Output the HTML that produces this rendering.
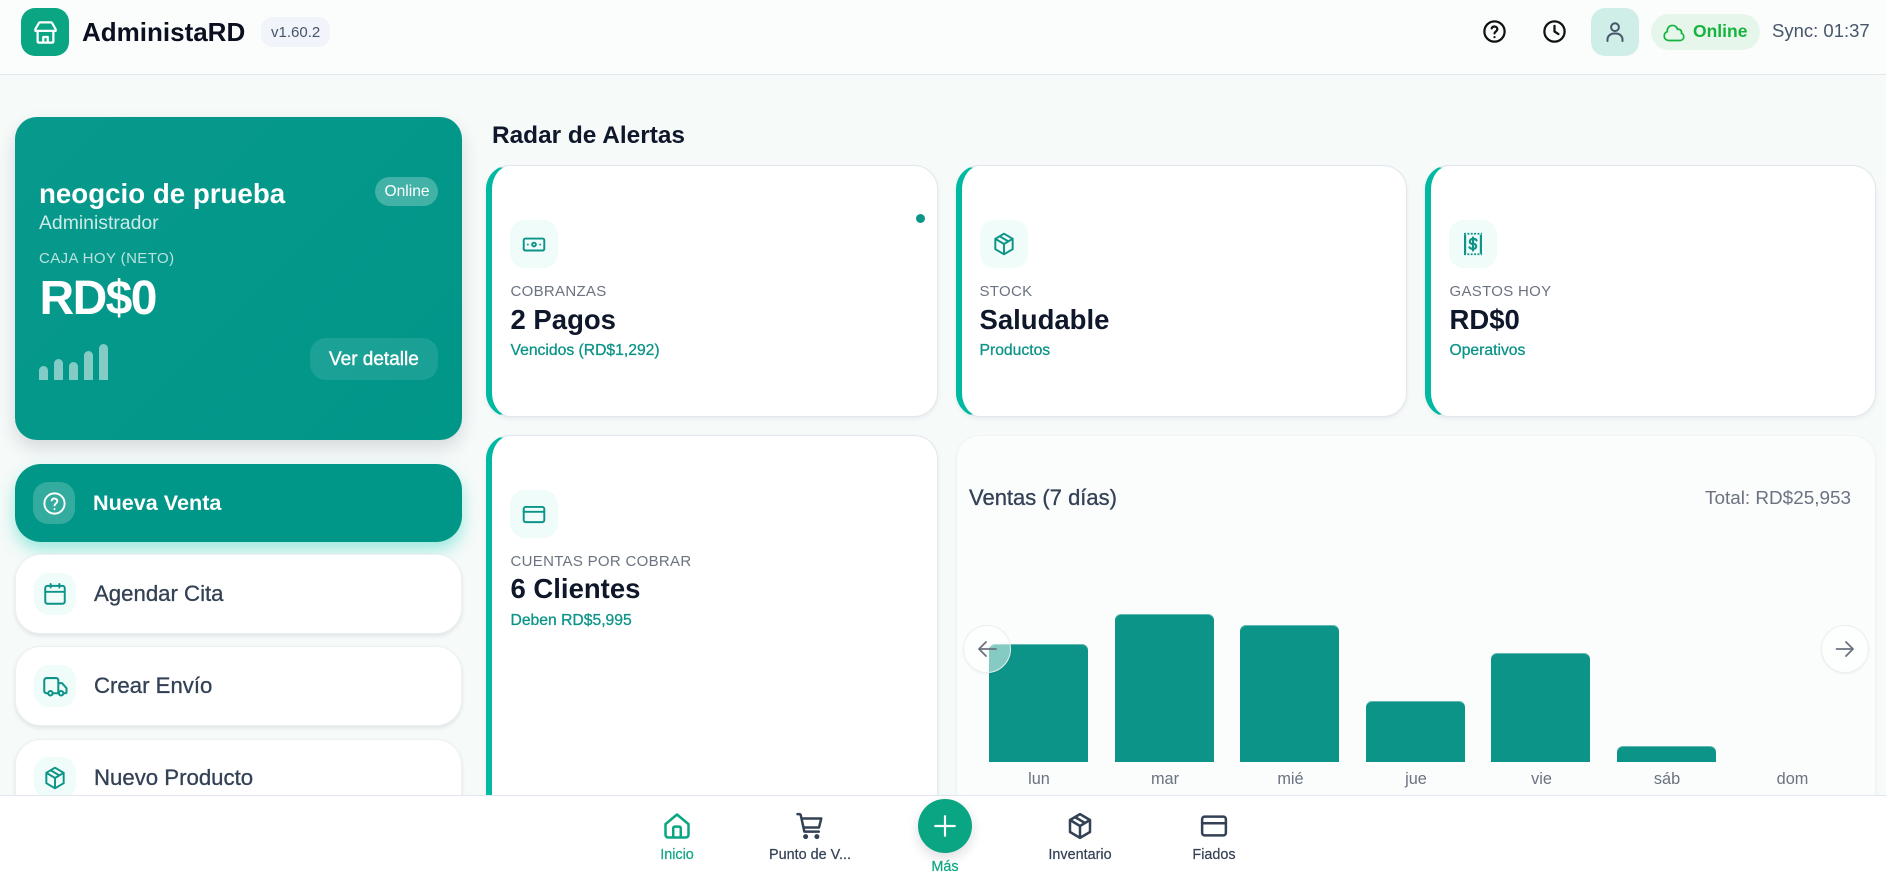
<!DOCTYPE html>
<html lang="es"><head><meta charset="utf-8"><title>AdministaRD</title>
<style>
*{box-sizing:border-box;margin:0;padding:0}
html,body{width:1886px;height:878px;overflow:hidden}
body{position:relative;background:#f6faf9;font-family:"Liberation Sans",sans-serif;color:#0f172a}
.a,.t{position:absolute}
.t{white-space:nowrap;line-height:1}
.m{-webkit-text-stroke:.3px currentColor}
svg{display:block;fill:none;stroke:currentColor;stroke-linecap:round;stroke-linejoin:round}
.tile{position:absolute;display:flex;align-items:center;justify-content:center;background:#effcfa;color:#0d9488;border-radius:15px}
.card{position:absolute;background:#fff;border:1px solid #e2e6ee;border-left:6px solid #00b9a2;border-radius:24px;box-shadow:0 2px 5px rgba(15,23,42,.06)}
.act{position:absolute;left:15px;width:447px;background:#fff;border:1px solid #eef1f4;border-radius:26px;box-shadow:0 2px 4px rgba(15,23,42,.1)}
.lab{font-size:15px;letter-spacing:.3px;color:#6b7280}
.val{font-size:27.5px;font-weight:700;color:#0f172a}
.sub{font-size:15.7px;color:#0d9488}
.act-t{font-size:22.2px;color:#334155}
.bar{position:absolute;width:99px;background:#0d9488;border-radius:6px 6px 0 0;bottom:116px;box-shadow:inset 0 1px 0 rgba(255,255,255,.35)}
.day{font-size:16.3px;color:#6b7280;transform:translateX(-50%)}
.hb{position:absolute;width:9px;bottom:498px;background:rgba(255,255,255,.5);border-radius:5px 5px 0 0}
.nl{font-size:14.4px;color:#334155;transform:translateX(-50%);-webkit-text-stroke:.2px currentColor}
.arr{position:absolute;top:625px;width:48px;height:48px;border-radius:50%;background:rgba(255,255,255,.5);border:1px solid #ebeef1;display:flex;align-items:center;justify-content:center;color:#6b7280;box-shadow:0 1px 2px rgba(0,0,0,.05)}
</style></head><body>

<!-- Header -->
<div class="a" style="left:0;top:0;width:1886px;height:75px;background:#fbfdfc;border-bottom:1px solid #e2e6ee"></div>
<div class="a" style="left:21px;top:8px;width:48px;height:48px;border-radius:14px;background:#0aa582;display:flex;align-items:center;justify-content:center;color:#fff">
<svg width="27" height="27" viewBox="0 0 24 24" stroke-width="2"><path d="M7 3h10a1 1 0 0 1 .9.6L21 9v1.500H3V9l3.100-5.400A1 1 0 0 1 7 3zM5 10.500V20a1 1 0 0 0 1 1h12a1 1 0 0 0 1-1v-9.500M10 21v-5h4v5"/></svg></div>
<div class="t" style="left:82px;top:19px;font-size:26px;font-weight:700;color:#0b1020">AdministaRD</div>
<div class="a" style="left:261px;top:17px;width:69px;height:30px;background:#f1f4fa;border-radius:12px"></div>
<div class="t" style="left:271px;top:24.500px;font-size:15px;color:#475569">v1.60.2</div>

<svg class="a" style="left:1481px;top:18px;color:#111" width="27" height="27" viewBox="0 0 24 24" stroke-width="2"><path d="M9.500 9.200a2.600 2.600 0 0 1 5 .800c0 1.700-2.500 2.200-2.500 3.700M21 12a9 9 0 1 1-18 0 9 9 0 0 1 18 0zm-9 5h.01"/></svg>
<svg class="a" style="left:1541px;top:18px;color:#111" width="27" height="27" viewBox="0 0 24 24" stroke-width="2"><path d="M12 7v5l3.500 2.300M21 12a9 9 0 1 1-18 0 9 9 0 0 1 18 0z"/></svg>
<div class="a" style="left:1591px;top:8px;width:48px;height:48px;border-radius:14px;background:#d0eee8;display:flex;align-items:center;justify-content:center;color:#475569">
<svg width="24" height="24" viewBox="0 0 24 24" stroke-width="2"><circle cx="12" cy="7.200" r="3.900"/><path d="M4.500 21v-1.500a6.500 6 0 0 1 6.500-6h2a6.500 6 0 0 1 6.500 6V21"/></svg></div>
<div class="a" style="left:1651px;top:14px;width:109px;height:36px;border-radius:18px;background:#e6f6ea"></div>
<svg class="a" style="left:1662px;top:21px;color:#16b33f" width="24" height="24" viewBox="0 0 24 24" stroke-width="1.700"><path d="M2.250 15a4.500 4.500 0 0 0 4.500 4.500H18a3.750 3.750 0 0 0 1.332-7.257 3 3 0 0 0-3.758-3.848 5.250 5.250 0 0 0-10.233 2.330A4.502 4.502 0 0 0 2.250 15z"/></svg>
<div class="t" style="left:1693px;top:23.200px;font-size:17.500px;font-weight:700;color:#16b33f">Online</div>
<div class="t" style="left:1772px;top:22.300px;font-size:18.500px;color:#475569">Sync: 01:37</div>

<!-- Hero -->
<div class="a" style="left:15px;top:117px;width:447px;height:323px;border-radius:22px;background:linear-gradient(135deg,#07998c,#009688);box-shadow:0 8px 18px rgba(15,23,42,.14)"></div>
<div class="t" style="left:39px;top:179.600px;font-size:27.700px;font-weight:700;color:#fff">neogcio de prueba</div>
<div class="a" style="left:375px;top:177px;width:63px;height:29px;border-radius:15px;background:rgba(255,255,255,.25)"></div>
<div class="t" style="left:384.500px;top:183.500px;font-size:15.600px;color:#fff">Online</div>
<div class="t" style="left:39px;top:213.600px;font-size:19.400px;color:rgba(255,255,255,.8)">Administrador</div>
<div class="t" style="left:39px;top:250.600px;font-size:15px;letter-spacing:.4px;color:rgba(255,255,255,.72)">CAJA HOY (NETO)</div>
<div class="t" style="left:39.500px;top:275.400px;font-size:48px;letter-spacing:-1.600px;font-weight:700;color:#fff">RD$0</div>
<div class="hb" style="left:39px;height:14px"></div>
<div class="hb" style="left:54px;height:21px"></div>
<div class="hb" style="left:69px;height:18px"></div>
<div class="hb" style="left:84px;height:29px"></div>
<div class="hb" style="left:99px;height:36px"></div>
<div class="a" style="left:310px;top:338px;width:128px;height:42px;border-radius:16px;background:rgba(255,255,255,.1)"></div>
<div class="t m" style="left:329px;top:349.600px;font-size:19px;color:#fff;-webkit-text-stroke:.4px #fff">Ver detalle</div>

<!-- Actions -->
<div class="a" style="left:15px;top:464px;width:447px;height:78px;border-radius:26px;background:#009688;box-shadow:0 8px 16px rgba(45,212,191,.45)"></div>
<div class="a" style="left:33px;top:482px;width:42px;height:42px;border-radius:15px;background:rgba(255,255,255,.2);display:flex;align-items:center;justify-content:center;color:#fff">
<svg width="27" height="27" viewBox="0 0 24 24" stroke-width="1.700"><path d="M9.500 9.200a2.600 2.600 0 0 1 5 .800c0 1.700-2.500 2.200-2.500 3.700M21 12a9 9 0 1 1-18 0 9 9 0 0 1 18 0zm-9 5h.01"/></svg></div>
<div class="t" style="left:93px;top:491.700px;font-size:21.600px;font-weight:700;color:#fff">Nueva Venta</div>

<div class="act" style="top:554px;height:80px"></div>
<div class="tile" style="left:34px;top:573px;width:42px;height:42px"><svg width="26" height="26" viewBox="0 0 24 24" stroke-width="1.800"><rect x="3" y="4.500" width="18" height="16.500" rx="2"/><path d="M3 10h18M8 2.700v3.300M16 2.700v3.300"/></svg></div>
<div class="t act-t m" style="left:94px;top:583px">Agendar Cita</div>

<div class="act" style="top:646px;height:80px"></div>
<div class="tile" style="left:34px;top:665px;width:42px;height:42px"><svg width="27" height="27" viewBox="0 0 24 24" stroke-width="1.800"><path d="M5.500 18H4a2 2 0 0 1-2-2V6.500a2 2 0 0 1 2-2h8.500a2 2 0 0 1 2 2V18M9.500 18h5M14.500 9h3.300l4 4.500V17a1 1 0 0 1-1 1h-1.300"/><circle cx="7.500" cy="18" r="2"/><circle cx="17" cy="18" r="2"/></svg></div>
<div class="t act-t m" style="left:94px;top:675px">Crear Envío</div>

<div class="act" style="top:739px;height:90px"></div>
<div class="tile" style="left:34px;top:757px;width:42px;height:42px"><svg width="26" height="26" viewBox="0 0 24 24" stroke-width="1.800"><path d="M12 2.500l8 4.700v9.600l-8 4.700-8-4.700V7.200zM4 7.200 12 12l8-4.800M12 12v9.500M8 4.900l8 4.700"/></svg></div>
<div class="t act-t m" style="left:94px;top:767.400px">Nuevo Producto</div>

<!-- Radar -->
<div class="t" style="left:492px;top:123.700px;font-size:24.400px;font-weight:700;color:#0f172a">Radar de Alertas</div>

<div class="card" style="left:486px;top:165px;width:452px;height:252px"></div>
<div class="a" style="left:915.500px;top:213.500px;width:9px;height:9px;border-radius:50%;background:#0d9488"></div>
<div class="tile" style="left:510px;top:220px;width:48px;height:48px"><svg width="26" height="26" viewBox="0 0 24 24" stroke-width="1.800"><rect x="2.500" y="7" width="19" height="11" rx="1.500"/><circle cx="12" cy="12.500" r="1.700"/><path d="M6.300 12.500h.01M17.700 12.500h.01"/></svg></div>
<div class="t lab" style="left:510.500px;top:284.300px">COBRANZAS</div>
<div class="t val" style="left:510.500px;top:306.100px">2 Pagos</div>
<div class="t sub m" style="left:510.500px;top:342.800px">Vencidos (RD$1,292)</div>

<div class="card" style="left:956px;top:165px;width:451px;height:252px"></div>
<div class="tile" style="left:980px;top:220px;width:48px;height:48px"><svg width="26" height="26" viewBox="0 0 24 24" stroke-width="1.800"><path d="M12 2.500l8 4.700v9.600l-8 4.700-8-4.700V7.200zM4 7.200 12 12l8-4.800M12 12v9.500M8 4.900l8 4.700"/></svg></div>
<div class="t lab" style="left:979.500px;top:284.300px">STOCK</div>
<div class="t val" style="left:979.500px;top:306.100px">Saludable</div>
<div class="t sub m" style="left:979.500px;top:342.800px">Productos</div>

<div class="card" style="left:1425px;top:165px;width:451px;height:252px"></div>
<div class="tile" style="left:1449px;top:220px;width:48px;height:48px"><svg width="26" height="26" viewBox="0 0 24 24" stroke-width="2"><path d="M4.700 3.500v17.500M19.300 3.500v17.500" stroke-linecap="butt"/><path d="M3.700 2.500h16.600M3.700 21.500h16.600" stroke-dasharray="1.800 1.300" stroke-linecap="butt" stroke-width="1.600"/><path d="M12 6v12M15.300 8.700a2.700 2 0 0 0-2.700-1.300h-1.200a2.300 2.200 0 0 0 0 4.500h1.200a2.300 2.200 0 0 1 0 4.500h-1.200a2.700 2 0 0 1-2.700-1.400"/></svg></div>
<div class="t lab" style="left:1449.500px;top:284.300px">GASTOS HOY</div>
<div class="t val" style="left:1449.500px;top:306.100px">RD$0</div>
<div class="t sub m" style="left:1449.500px;top:342.800px">Operativos</div>

<div class="card" style="left:486px;top:435px;width:452px;height:400px"></div>
<div class="tile" style="left:510px;top:490px;width:48px;height:48px"><svg width="26" height="26" viewBox="0 0 24 24" stroke-width="1.800"><rect x="2.500" y="5.500" width="19" height="14" rx="1.800"/><path d="M2.500 10h19"/></svg></div>
<div class="t lab" style="left:510.500px;top:554.300px">CUENTAS POR COBRAR</div>
<div class="t val" style="left:510.500px;top:574.700px">6 Clientes</div>
<div class="t sub m" style="left:510.500px;top:612.800px">Deben RD$5,995</div>

<!-- Chart -->
<div class="a" style="left:956px;top:435px;width:920px;height:400px;background:#fbfdfd;border:1px solid #f1f4f5;border-radius:24px;box-shadow:0 1px 3px rgba(15,23,42,.04)"></div>
<div class="t m" style="left:969px;top:487.400px;font-size:22px;color:#334155">Ventas (7 días)</div>
<div class="t" style="left:1705px;top:490px;font-size:18.900px;color:#6b7280">Total: RD$25,953</div>
<div class="bar" style="left:989px;top:644px"></div>
<div class="bar" style="left:1115px;top:614px"></div>
<div class="bar" style="left:1240px;top:625px"></div>
<div class="bar" style="left:1365.500px;top:701px"></div>
<div class="bar" style="left:1491px;top:653px"></div>
<div class="bar" style="left:1617px;top:746px"></div>
<div class="t day" style="left:1039px;top:770.500px">lun</div>
<div class="t day" style="left:1165px;top:770.500px">mar</div>
<div class="t day" style="left:1290.500px;top:770.500px">mié</div>
<div class="t day" style="left:1416px;top:770.500px">jue</div>
<div class="t day" style="left:1541.500px;top:770.500px">vie</div>
<div class="t day" style="left:1667px;top:770.500px">sáb</div>
<div class="t day" style="left:1792.500px;top:770.500px">dom</div>
<div class="arr" style="left:963px"><svg width="24" height="24" viewBox="0 0 24 24" stroke-width="1.800"><path d="M21 12H4.500M11 5l-7 7 7 7"/></svg></div>
<div class="arr" style="left:1821px"><svg width="24" height="24" viewBox="0 0 24 24" stroke-width="1.800"><path d="M3.500 12H20M13 5l7 7-7 7"/></svg></div>

<!-- Bottom nav -->
<div class="a" style="left:0;top:795px;width:1886px;height:83px;background:#fff;border-top:1px solid #e2e6ee"></div>
<svg class="a" style="left:662px;top:811px;color:#0aa582" width="30" height="30" viewBox="0 0 24 24" stroke-width="2"><path d="M2.800 10.500 12 2.800l9.200 7.700V19a2.200 2.200 0 0 1-2.200 2.200H5A2.200 2.200 0 0 1 2.800 19zM9 21v-7.300a1.200 1.200 0 0 1 1.200-1.200h3.600a1.200 1.200 0 0 1 1.200 1.200V21"/></svg>
<svg class="a" style="left:795px;top:811px;color:#334155" width="30" height="30" viewBox="0 0 24 24" stroke-width="2"><path d="M2 2.500h1.500c.5 0 .9.300 1.100.800L7.500 16.500h11.500M5.300 6h15.700l-1.800 7.200H6.800"/><circle cx="8.500" cy="20.500" r="1" fill="#334155"/><circle cx="17.500" cy="20.500" r="1" fill="#334155"/></svg>
<div class="a" style="left:918px;top:799px;width:54px;height:54px;border-radius:50%;background:#0aa582;box-shadow:0 5px 12px rgba(15,23,42,.14);display:flex;align-items:center;justify-content:center;color:#fff"><svg width="26" height="26" viewBox="0 0 24 24" stroke-width="2"><path d="M12 3v18M3 12h18"/></svg></div>
<svg class="a" style="left:1065px;top:811px;color:#334155" width="30" height="30" viewBox="0 0 24 24" stroke-width="2"><path d="M12 2.500l8 4.700v9.600l-8 4.700-8-4.700V7.200zM4 7.200 12 12l8-4.800M12 12v9.500M8 4.900l8 4.700"/></svg>
<svg class="a" style="left:1199px;top:811px;color:#334155" width="30" height="30" viewBox="0 0 24 24" stroke-width="2"><rect x="2.500" y="4.500" width="19" height="15" rx="2"/><path d="M2.500 9.800h19"/></svg>
<div class="t nl" style="left:677px;top:847.800px;color:#0aa582">Inicio</div>
<div class="t nl" style="left:810px;top:847.800px">Punto de V...</div>
<div class="t nl" style="left:945px;top:859.500px;color:#0aa582">Más</div>
<div class="t nl" style="left:1080px;top:847.800px">Inventario</div>
<div class="t nl" style="left:1214px;top:847.800px">Fiados</div>
</body></html>
